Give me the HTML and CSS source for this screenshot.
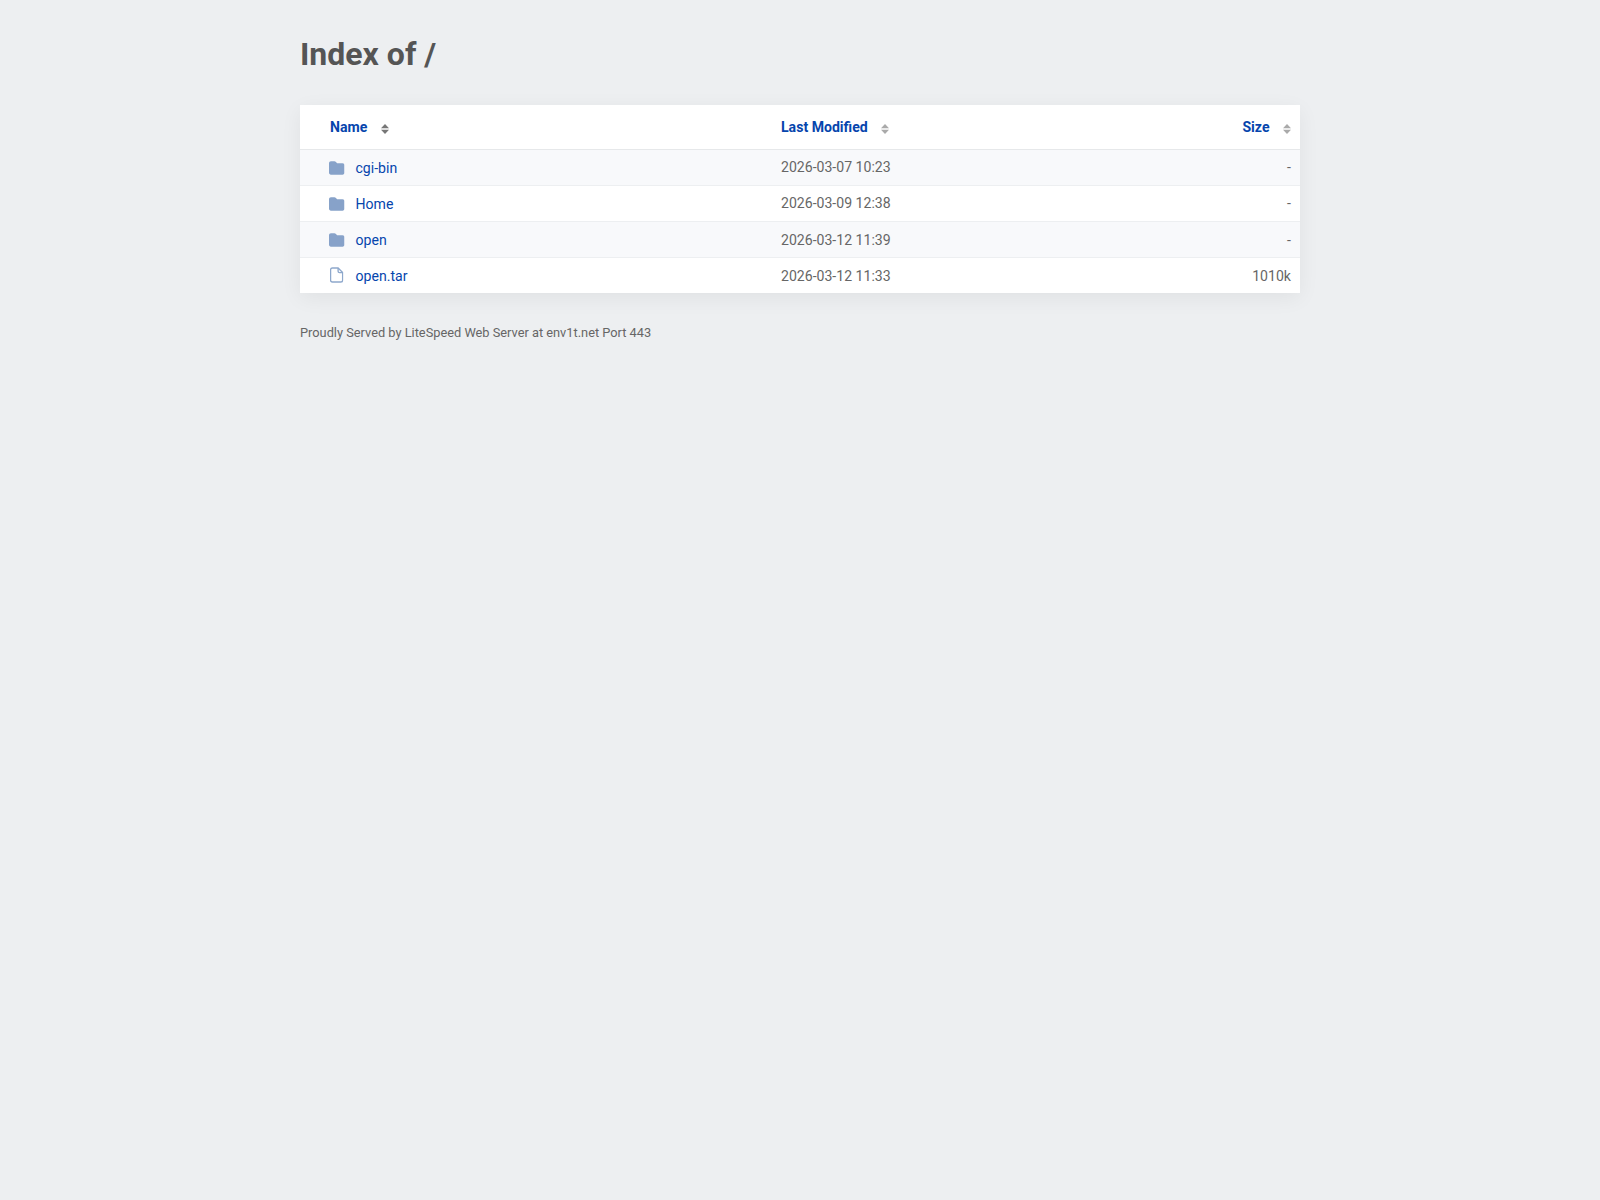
FILE: index.html
```html
<!DOCTYPE html>
<html lang="en">

<head>
    <meta charset="UTF-8" />
    <title>Index of /</title>
    <link rel="stylesheet" href="styles.css">
</head>

<body>
    <svg class="sprites" width="0" height="0">
        <symbol id="folder" viewBox="0 0 16 14">
            <path d="M2 0h3.600c.5 0 .9.2 1.300.5L8.400 2H14c1.100 0 2 .9 2 2v8c0 1.100-.9 2-2 2H2c-1.100 0-2-.9-2-2V2C0 .9.9 0 2 0z" />
        </symbol>
        <symbol id="file" viewBox="0 0 14 16">
            <path d="M2.400.75h6l4.700 4.800v7.800c0 1.100-.8 1.900-1.800 1.900H2.400c-1 0-1.800-.8-1.800-1.900V2.650c0-1.100.8-1.900 1.800-1.900z" />
            <path d="M8.400.75v3.300c0 .8.700 1.500 1.500 1.500h3.200" />
        </symbol>
        <symbol id="sort" viewBox="0 0 8 10">
            <path class="up" d="M4 0 8 4.200H0z" />
            <path class="down" d="M0 5.800h8L4 10z" />
        </symbol>
    </svg>

    <div class="container">
        <h1>Index of /</h1>

        <table class="listing">
            <thead>
                <tr>
                    <th class="col-name">
                        <a href="#">Name</a>
                        <svg class="sort-icon active"><use href="#sort" /></svg>
                    </th>
                    <th class="col-date">
                        <a href="#">Last Modified</a>
                        <svg class="sort-icon"><use href="#sort" /></svg>
                    </th>
                    <th class="col-size">
                        <a href="#">Size</a>
                        <svg class="sort-icon"><use href="#sort" /></svg>
                    </th>
                </tr>
            </thead>
            <tbody>
                <tr>
                    <td class="col-name">
                        <a href="#" class="entry"><svg class="icon-folder"><use href="#folder" /></svg>cgi-bin</a>
                    </td>
                    <td class="col-date">2026-03-07 10:23</td>
                    <td class="col-size">-</td>
                </tr>
                <tr>
                    <td class="col-name">
                        <a href="#" class="entry"><svg class="icon-folder"><use href="#folder" /></svg>Home</a>
                    </td>
                    <td class="col-date">2026-03-09 12:38</td>
                    <td class="col-size">-</td>
                </tr>
                <tr>
                    <td class="col-name">
                        <a href="#" class="entry"><svg class="icon-folder"><use href="#folder" /></svg>open</a>
                    </td>
                    <td class="col-date">2026-03-12 11:39</td>
                    <td class="col-size">-</td>
                </tr>
                <tr>
                    <td class="col-name">
                        <a href="#" class="entry"><svg class="icon-file"><use href="#file" /></svg>open.tar</a>
                    </td>
                    <td class="col-date">2026-03-12 11:33</td>
                    <td class="col-size">1010k</td>
                </tr>
            </tbody>
        </table>

        <div class="footer">Proudly Served by LiteSpeed Web Server at env1t.net Port 443</div>
    </div>
</body>

</html>
```
FILE: styles.css
```css
body {
    font-family: Roboto, "Liberation Sans", sans-serif;
    background-color: #edeff1;
    color: #666;
    margin: 0;
    padding: 0;
}

.sprites {
    position: absolute;
}

.container {
    width: 1000px;
    margin: 0 auto;
}

h1 {
    font-size: 32px;
    line-height: 38px;
    font-weight: 700;
    color: #555;
    margin: 0;
    padding: 35px 0 32px;
}

a {
    color: #0645ad;
    text-decoration: none;
}

.listing {
    width: 100%;
    border-collapse: collapse;
    table-layout: fixed;
    background-color: #fff;
    box-shadow: 0 5px 20px rgba(0, 0, 0, 0.06);
    font-size: 14.08px;
}

.listing th {
    height: 44px;
    padding: 0;
    font-weight: 700;
    border-bottom: 1px solid #e6e8ea;
    text-align: left;
}

.listing td {
    height: 35px;
    padding: 0;
    border-bottom: 1px solid #edeff1;
}

.listing tbody tr:last-child td {
    border-bottom: none;
}

.listing tbody tr:nth-child(odd) {
    background-color: #f8f9fb;
}

/* the first two rows sit a pixel higher in the date and size cells */
.listing tbody tr:nth-child(-n+2) td.col-date,
.listing tbody tr:nth-child(-n+2) td.col-size {
    height: 33px;
    padding-bottom: 2px;
}

.col-name {
    width: 451px;
    padding-left: 30px !important;
}

.col-date {
    width: 350px;
}

.listing .col-size {
    text-align: right;
    padding-right: 9px;
}

.entry {
    display: flex;
    align-items: center;
}

.icon-folder {
    width: 15.5px;
    height: 14px;
    margin: 0 11px 0 -1px;
    fill: #87a2c9;
    flex-shrink: 0;
}

.icon-file {
    width: 13.5px;
    height: 16px;
    margin: 0 12px 1px 0;
    fill: none;
    stroke: #8ea8cc;
    stroke-width: 1.4;
    flex-shrink: 0;
}

.sort-icon {
    width: 8px;
    height: 10px;
    margin-left: 10px;
    vertical-align: -2px;
    fill: #aaa;
}

.sort-icon.active {
    fill: #777;
}

.footer {
    font-size: 12.800px;
    line-height: 16px;
    color: #666;
    margin-top: 32px;
}
```
